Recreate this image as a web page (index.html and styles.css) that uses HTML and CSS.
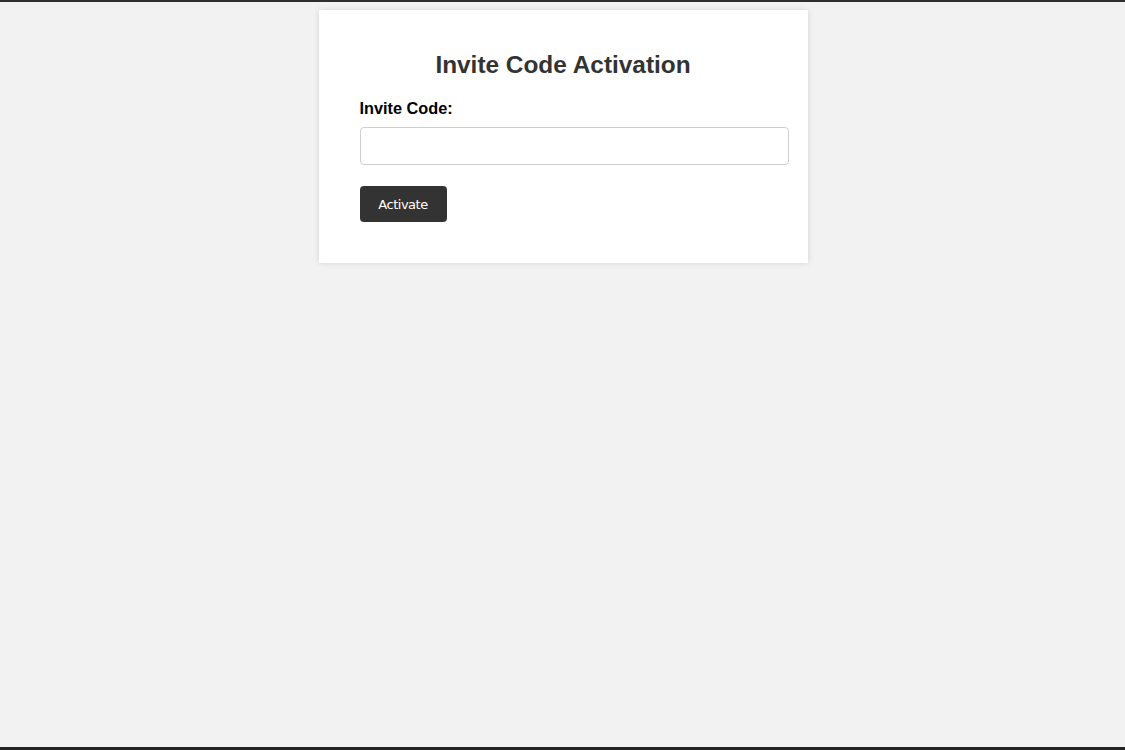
FILE: index.html
```html
<!DOCTYPE html>
<html>
<head>
<meta charset="utf-8">
<title>Invite Code Activation</title>
<link rel="stylesheet" href="styles.css">
</head>
<body>
<div class="page">
  <div class="card">
    <h2 class="title">Invite Code Activation</h2>
    <form class="form">
      <label class="label" for="code">Invite Code:</label>
      <input class="input" id="code" type="text">
      <button class="btn" type="button">Activate</button>
    </form>
  </div>
</div>
</body>
</html>
```
FILE: styles.css
```css
html, body {
  margin: 0;
  padding: 0;
}
body {
  background: #f2f2f2;
  font-family: "Liberation Sans", Arial, sans-serif;
}
.page {
  box-sizing: border-box;
  height: 750px;
  border-top: 2px solid #2e2e2e;
  border-bottom: 3px solid #232323;
  padding-top: 8px;
  display: flex;
  flex-direction: column;
  align-items: center;
}
.card {
  box-sizing: border-box;
  width: 489px;
  margin-left: 1px;
  background: #fff;
  padding: 41px 19px 41px 41px;
  box-shadow: 0 0 6px rgba(0, 0, 0, 0.12);
}
.title {
  margin: 0 0 20px;
  font-size: 24.4px;
  font-weight: bold;
  color: #333;
  text-align: center;
  padding-right: 22px;
  line-height: 28px;
}
.form {
  display: flex;
  flex-direction: column;
  align-items: flex-start;
}
.label {
  font-size: 16.3px;
  font-weight: bold;
  color: #000;
  line-height: 18px;
  margin-bottom: 10px;
}
.input {
  box-sizing: border-box;
  width: 429px;
  height: 38px;
  border: 1px solid #cfcfcf;
  border-radius: 4px;
  padding: 8px 10px;
  font-size: 14px;
  margin: 0 0 21px;
  background: #fff;
}
.btn {
  box-sizing: border-box;
  width: 87px;
  height: 36px;
  border: none;
  border-radius: 4px;
  background: #333;
  color: #fff;
  font-family: "DejaVu Sans", Verdana, sans-serif;
  font-size: 13px;
  letter-spacing: -0.5px;
  padding: 0;
  cursor: pointer;
}
```
